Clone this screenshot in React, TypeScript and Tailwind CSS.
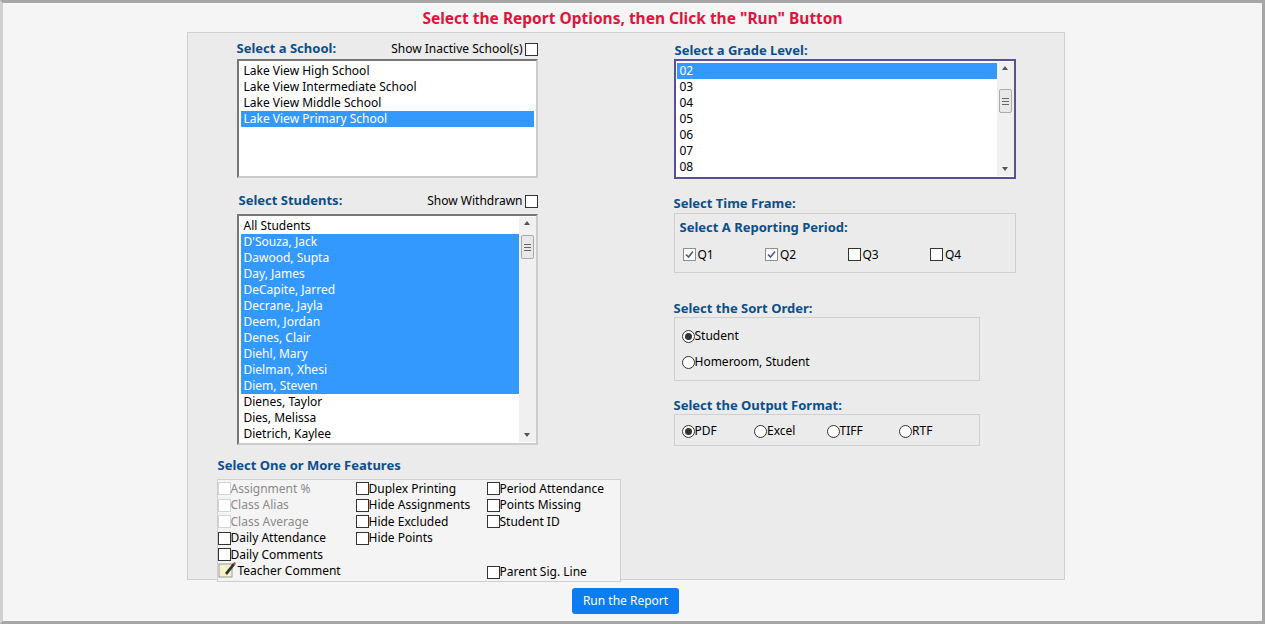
import React from "react";

const lbl = "font-['DejaVu_Sans',sans-serif] font-bold text-[13px] text-[#0b4f8a]";
const body = "font-['Liberation_Sans',Arial,sans-serif] text-[12px] text-black";

function Box({ checked = false, disabled = false }: { checked?: boolean; disabled?: boolean }) {
  return (
    <span className={`inline-flex w-[13px] h-[13px] border ${disabled ? "border-[#d4d4d4]" : checked ? "border-[#8f8f8f] bg-[#f0f0f0]" : "border-[#333]"} bg-white items-center justify-center shrink-0`}>
      {checked && (
        <svg width="9" height="9" viewBox="0 0 9 9"><path d="M1 4.5 L3.5 7 L8 1.5" stroke="#4a5a8a" strokeWidth="1.6" fill="none" /></svg>
      )}
    </span>
  );
}

function Radio({ on = false }: { on?: boolean }) {
  return (
    <span className="inline-flex w-[13px] h-[13px] rounded-full border border-[#333] bg-white items-center justify-center shrink-0">
      {on && <span className="w-[7px] h-[7px] rounded-full bg-[#333]" />}
    </span>
  );
}

function Scrollbar({ thumbTop }: { thumbTop: number }) {
  return (
    <div className="relative w-[17px] bg-[#f0f0f0] shrink-0">
      <div className="absolute top-[4px] left-[5px] w-0 h-0 border-l-[3px] border-r-[3px] border-b-[4px] border-l-transparent border-r-transparent border-b-[#555]" />
      <div className="absolute left-[2px] w-[13px] h-[24px] border border-[#aaa] rounded-[2px] bg-[#e8e8e8] flex flex-col items-center justify-center gap-[2px]" style={{ top: thumbTop }}>
        <span className="w-[7px] h-px bg-[#666]" /><span className="w-[7px] h-px bg-[#666]" /><span className="w-[7px] h-px bg-[#666]" />
      </div>
      <div className="absolute bottom-[5px] left-[5px] w-0 h-0 border-l-[3px] border-r-[3px] border-t-[4px] border-l-transparent border-r-transparent border-t-[#555]" />
    </div>
  );
}

const students = [
  ["All Students", false], ["D'Souza, Jack", true], ["Dawood, Supta", true], ["Day, James", true],
  ["DeCapite, Jarred", true], ["Decrane, Jayla", true], ["Deem, Jordan", true], ["Denes, Clair", true],
  ["Diehl, Mary", true], ["Dielman, Xhesi", true], ["Diem, Steven", true], ["Dienes, Taylor", false],
  ["Dies, Melissa", false], ["Dietrich, Kaylee", false],
] as [string, boolean][];

function Row({ t, sel }: { t: string; sel?: boolean }) {
  return <div className={`h-[16px] leading-[16px] pl-[3px] ${sel ? "bg-[#3399ff] text-white" : ""}`}>{t}</div>;
}

function Feat({ t, dis, pencil }: { t: string; dis?: boolean; pencil?: boolean }) {
  return (
    <div className={`flex items-center h-[16.5px] ${dis ? "text-[#8a8a8a]" : ""}`}>
      {pencil ? (
        <svg width="20" height="18" viewBox="0 0 20 18" className="mr-0 -mt-[2px]">
          <rect x="1" y="3" width="13" height="13" fill="#f7f3c8" stroke="#999" />
          <path d="M7 12 L15 2 L17 4 L9 14 Z" fill="#333" />
          <path d="M15 2 L17 4 L18 2.5 L16.5 1 Z" fill="#d33" />
        </svg>
      ) : (
        <Box disabled={dis} />
      )}
      <span>{t}</span>
    </div>
  );
}

export default function App() {
  return (
    <div className={`w-[1265px] h-[624px] bg-[#f5f5f5] border-t-[3px] border-r-[3px] border-b-[3px] border-l-[3px] border-[#a6a6a6] border-l-[#d0d0d0] ${body} flex flex-col items-center overflow-hidden`}>
      <div className="font-['DejaVu_Sans',sans-serif] font-bold text-[15.5px] text-[#e0143c] h-[29px] leading-[31px]">
        Select the Report Options, then Click the "Run" Button
      </div>
      <div className="w-[878px] h-[548px] bg-[#ebebeb] border border-[#cfcfcf] flex -ml-[14px]">
        {/* left */}
        <div className="w-[486px] pl-[29px] pt-[8px] flex flex-col">
          <div className="ml-[20px] w-[301px]">
            <div className="flex justify-between items-end h-[17px]">
              <span className={lbl}>Select a School:</span>
              <span className="flex items-center gap-[2px]">Show Inactive School(s) <Box /></span>
            </div>
            <div className="mt-[1px] h-[119px] bg-white border-2 border-t-[#777] border-l-[#777] border-r-[#ccc] border-b-[#ccc] pt-[2px] px-[2px]">
              <Row t="Lake View High School" /><Row t="Lake View Intermediate School" /><Row t="Lake View Middle School" /><Row t="Lake View Primary School" sel />
            </div>
            <div className="flex justify-between items-end h-[17px] mt-[15px] pl-[2px]">
              <span className={lbl}>Select Students:</span>
              <span className="flex items-center gap-[2px]">Show Withdrawn <Box /></span>
            </div>
            <div className="mt-[4px] h-[231px] bg-white border-2 border-t-[#777] border-l-[#777] border-r-[#ccc] border-b-[#ccc] flex">
              <div className="flex-1 pt-[2px] pl-[2px]">
                {students.map(([t, s]) => <Row key={t} t={t} sel={s} />)}
              </div>
              <div className="py-[1px] flex"><Scrollbar thumbTop={18} /></div>
            </div>
          </div>
          <div className={`${lbl} mt-[11px] pl-[1px]`}>Select One or More Features</div>
          <div className="mt-[3px] w-[404px] h-[104px] border border-[#cfcfcf] bg-[#f4f4f4] flex pt-[1px]">
            <div className="w-[138px]">
              <Feat t="Assignment %" dis /><Feat t="Class Alias" dis /><Feat t="Class Average" dis />
              <Feat t="Daily Attendance" /><Feat t="Daily Comments" /><Feat t="Teacher Comment" pencil />
            </div>
            <div className="w-[131px]">
              <Feat t="Duplex Printing" /><Feat t="Hide Assignments" /><Feat t="Hide Excluded" /><Feat t="Hide Points" />
            </div>
            <div className="flex flex-col">
              <Feat t="Period Attendance" /><Feat t="Points Missing" /><Feat t="Student ID" />
              <div className="mt-[34px]"><Feat t="Parent Sig. Line" /></div>
            </div>
          </div>
        </div>
        {/* right */}
        <div className="pt-[8px] flex flex-col">
          <div className={`${lbl} pl-[1px] h-[17px]`}>Select a Grade Level:</div>
          <div className="mt-[1px] w-[342px] h-[120px] bg-white border-2 border-[#5a4f9a] flex">
            <div className="flex-1 pt-[2px] pl-[1px]">
              {["02", "03", "04", "05", "06", "07", "08"].map((g, i) => <Row key={g} t={g} sel={i === 0} />)}
            </div>
            <div className="py-[1px] flex"><Scrollbar thumbTop={27} /></div>
          </div>
          <div className={`${lbl} mt-[15px] h-[17px]`}>Select Time Frame:</div>
          <div className="mt-[2px] w-[342px] h-[60px] border border-[#cfcfcf] px-[5px] pt-[4px]">
            <div className={lbl}>Select A Reporting Period:</div>
            <div className="flex mt-[8px]">
              {[["Q1", true], ["Q2", true], ["Q3", false], ["Q4", false]].map(([q, c]) => (
                <span key={q as string} className="w-[83px] flex items-center gap-[2px] pl-[3px]"><Box checked={c as boolean} />{q}</span>
              ))}
            </div>
          </div>
          <div className={`${lbl} mt-[26px] h-[17px]`}>Select the Sort Order:</div>
          <div className="mt-[1px] w-[306px] h-[64px] border border-[#cfcfcf] px-[7px] pt-[10px]">
            <div className="flex items-center h-[16px]"><Radio on />Student</div>
            <div className="flex items-center h-[16px] mt-[10px]"><Radio />Homeroom, Student</div>
          </div>
          <div className={`${lbl} mt-[15px] h-[17px]`}>Select the Output Format:</div>
          <div className="mt-[1px] w-[306px] h-[32px] border border-[#cfcfcf] px-[7px] flex items-center">
            {["PDF", "Excel", "TIFF", "RTF"].map((f, i) => (
              <span key={f} className="w-[76px] flex items-center h-[16px] mt-[2px]"><Radio on={i === 0} />{f}</span>
            ))}
          </div>
        </div>
      </div>
      <button className="mt-[8px] -ml-[14px] h-[26px] px-[11px] rounded-[3px] bg-[#0b7cf2] text-white text-[12px] font-['Liberation_Sans',Arial,sans-serif]">
        Run the Report
      </button>
    </div>
  );
}
